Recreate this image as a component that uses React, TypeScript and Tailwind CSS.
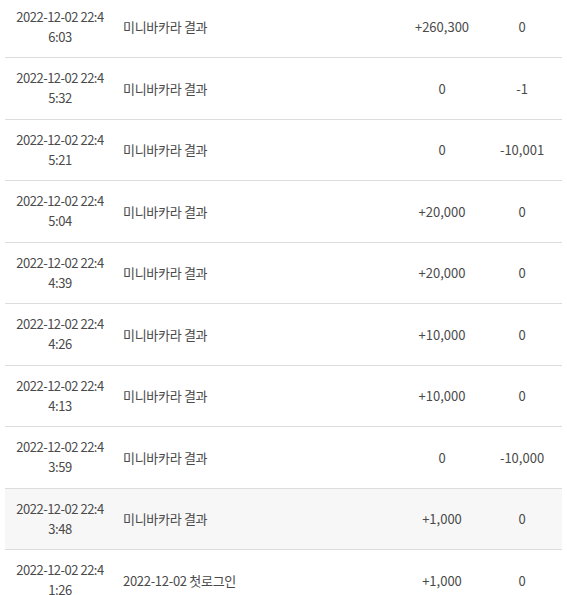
import React from "react";

type Row = { d1: string; d2: string; memo: string; amount: string; point: string; gray?: boolean };

const rows: Row[] = [
  { d1: "2022-12-02 22:4", d2: "6:03", memo: "미니바카라 결과", amount: "+260,300", point: "0" },
  { d1: "2022-12-02 22:4", d2: "5:32", memo: "미니바카라 결과", amount: "0", point: "-1" },
  { d1: "2022-12-02 22:4", d2: "5:21", memo: "미니바카라 결과", amount: "0", point: "-10,001" },
  { d1: "2022-12-02 22:4", d2: "5:04", memo: "미니바카라 결과", amount: "+20,000", point: "0" },
  { d1: "2022-12-02 22:4", d2: "4:39", memo: "미니바카라 결과", amount: "+20,000", point: "0" },
  { d1: "2022-12-02 22:4", d2: "4:26", memo: "미니바카라 결과", amount: "+10,000", point: "0" },
  { d1: "2022-12-02 22:4", d2: "4:13", memo: "미니바카라 결과", amount: "+10,000", point: "0" },
  { d1: "2022-12-02 22:4", d2: "3:59", memo: "미니바카라 결과", amount: "0", point: "-10,000" },
  { d1: "2022-12-02 22:4", d2: "3:48", memo: "미니바카라 결과", amount: "+1,000", point: "0", gray: true },
  { d1: "2022-12-02 22:4", d2: "1:26", memo: "2022-12-02 첫로그인", amount: "+1,000", point: "0" },
];

export default function App() {
  return (
    <div className="w-[567px] h-[595px] overflow-hidden bg-white">
      <div
        className="mx-[5px] -mt-[3.5px] text-[13px] text-[#4a4a4a]"
        style={{ fontFamily: '"Noto Sans CJK KR", "Noto Sans", sans-serif' }}
      >
        {rows.map((r, i) => (
          <div
            key={i}
            className={`flex items-center h-[61.5px] border-b border-[#ddd] ${r.gray ? "bg-[#f7f7f7]" : ""}`}
          >
            <div className="w-[110px] text-center leading-[20px] tracking-[-0.5px]">
              <div>{r.d1}</div>
              <div>{r.d2}</div>
            </div>
            <div className="flex-1 pl-[8px] tracking-[-0.3px]">{r.memo}</div>
            <div className="w-[80px] text-center">{r.amount}</div>
            <div className="w-[80px] text-center">{r.point}</div>
          </div>
        ))}
      </div>
    </div>
  );
}
